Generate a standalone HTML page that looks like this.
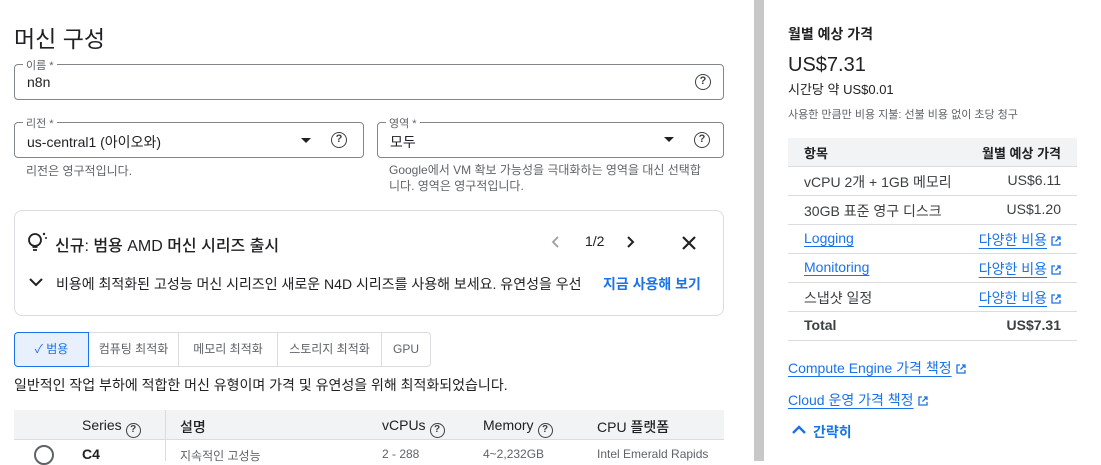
<!DOCTYPE html>
<html><head><meta charset="utf-8"><style>
*{margin:0;padding:0;box-sizing:border-box}
body{width:1101px;height:461px;overflow:hidden;background:#fff;font-family:"Liberation Sans","Noto Sans CJK KR",sans-serif;color:#202124;position:relative}
.a{position:absolute;white-space:nowrap}
.box{position:absolute;border:1px solid #80868b;border-radius:4px}
.lbl{position:absolute;top:-8px;left:8px;background:#fff;padding:0 3px;font-size:11px;color:#5f6368}
.help{position:absolute;width:16px;height:16px;border:1.6px solid #3c4043;border-radius:50%;font-size:11px;font-weight:bold;text-align:center;line-height:13px;color:#3c4043}
.hi{position:relative;display:inline-block;width:15px;height:15px;font-size:10px;line-height:12px;vertical-align:-2px;margin-left:4px}
.tri{position:absolute;width:0;height:0;border-left:5px solid transparent;border-right:5px solid transparent;border-top:5px solid #202124}
.blue{color:#1a73e8}
.lnk{color:#1a73e8;text-decoration:underline;text-underline-offset:3px}
.row{position:absolute;left:788px;width:289px;height:29px;border-bottom:1px solid #dadce0;font-size:14px;color:#3c4043}
.row .l{position:absolute;left:16px;top:5px}
.row .r{position:absolute;right:16px;top:5px}
.tab{position:absolute;top:332px;height:35px;border:1px solid #dadce0;font-size:12px;color:#5f6368;text-align:center;line-height:33px}
.ext{display:inline-block;width:10px;height:10px;margin-left:4px;vertical-align:-1px}
</style></head><body>
<div class="a" style="left:14px;top:20px;font-size:23px">머신 구성</div>

<div class="box" style="left:14px;top:64px;width:710px;height:36px"><span class="lbl">이름 *</span>
<span class="a" style="left:12px;top:9px;font-size:14px">n8n</span>
<div class="help" style="left:680px;top:9px">?</div></div>

<div class="box" style="left:14px;top:122px;width:350px;height:36px"><span class="lbl">리전 *</span>
<span class="a" style="left:12px;top:9px;font-size:14px">us-central1 (아이오와)</span>
<div class="tri" style="left:286px;top:15px"></div>
<div class="help" style="left:316px;top:9px">?</div></div>

<div class="box" style="left:377px;top:122px;width:347px;height:36px"><span class="lbl">영역 *</span>
<span class="a" style="left:12px;top:9px;font-size:14px">모두</span>
<div class="tri" style="left:286px;top:14px"></div>
<div class="help" style="left:316px;top:9px">?</div></div>

<div class="a" style="left:26px;top:162px;font-size:12px;color:#5f6368">리전은 영구적입니다.</div>
<div class="a" style="left:389px;top:162px;font-size:12px;color:#5f6368;line-height:16px">Google에서 VM 확보 가능성을 극대화하는 영역을 대신 선택합<br>니다. 영역은 영구적입니다.</div>

<div class="box" style="left:14px;top:210px;width:710px;height:106px;border-color:#dadce0;border-radius:8px"></div>
<svg class="a" style="left:26px;top:231px" width="24" height="24" viewBox="0 0 24 24"><circle cx="9" cy="9" r="6" fill="none" stroke="#202124" stroke-width="1.8"/><path d="M6.5 16h5M7 19h4" stroke="#202124" stroke-width="1.8"/><circle cx="18" cy="3" r="1.2" fill="#202124"/><circle cx="20" cy="7" r="1" fill="#202124"/></svg>
<div class="a" style="left:55px;top:232px;font-size:16px;font-weight:500">신규: 범용 AMD 머신 시리즈 출시</div>
<svg class="a" style="left:549px;top:235px" width="14" height="14"><path d="M9 2L4 7l5 5" fill="none" stroke="#9aa0a6" stroke-width="1.8"/></svg>
<div class="a" style="left:585px;top:233px;font-size:14px">1/2</div>
<svg class="a" style="left:624px;top:235px" width="14" height="14"><path d="M4 2l5 5-5 5" fill="none" stroke="#202124" stroke-width="2"/></svg>
<svg class="a" style="left:681px;top:235px" width="16" height="16"><path d="M2 2l12 12M14 2L2 14" stroke="#202124" stroke-width="2.2"/></svg>
<svg class="a" style="left:29px;top:277px" width="14" height="10"><path d="M1 2l6 6 6-6" fill="none" stroke="#202124" stroke-width="2"/></svg>
<div class="a" style="left:56px;top:274px;font-size:14px">비용에 최적화된 고성능 머신 시리즈인 새로운 N4D 시리즈를 사용해 보세요. 유연성을 우선</div>
<div class="a blue" style="left:603px;top:274px;font-size:14px;font-weight:bold">지금 사용해 보기</div>

<div class="tab" style="left:14px;width:75px;background:#e8f0fe;border-color:#1a73e8;color:#1a73e8;z-index:2;border-radius:4px 0 0 4px">✓ 범용</div>
<div class="tab" style="left:88px;width:91px">컴퓨팅 최적화</div>
<div class="tab" style="left:178px;width:100px">메모리 최적화</div>
<div class="tab" style="left:277px;width:105px">스토리지 최적화</div>
<div class="tab" style="left:381px;width:50px;border-radius:0 4px 4px 0">GPU</div>
<div class="a" style="left:14px;top:375px;font-size:14px">일반적인 작업 부하에 적합한 머신 유형이며 가격 및 유연성을 위해 최적화되었습니다.</div>

<div class="a" style="left:14px;top:410px;width:710px;height:30px;background:#f1f3f4;border-bottom:1px solid #dadce0"></div>
<div class="a" style="left:165px;top:410px;width:1px;height:51px;background:#dadce0"></div>
<div class="a" style="left:82px;top:417px;font-size:14px;font-weight:500">Series<span class="help hi">?</span></div>
<div class="a" style="left:180px;top:417px;font-size:14px;font-weight:500">설명</div>
<div class="a" style="left:382px;top:417px;font-size:14px;font-weight:500">vCPUs<span class="help hi">?</span></div>
<div class="a" style="left:483px;top:417px;font-size:14px;font-weight:500">Memory<span class="help hi">?</span></div>
<div class="a" style="left:597px;top:417px;font-size:14px;font-weight:500">CPU 플랫폼</div>
<div class="a" style="left:34px;top:445px;width:20px;height:20px;border:2px solid #5f6368;border-radius:50%"></div>
<div class="a" style="left:82px;top:446px;font-size:14px;font-weight:bold">C4</div>
<div class="a" style="left:180px;top:447px;font-size:12px;color:#5f6368">지속적인 고성능</div>
<div class="a" style="left:382px;top:447px;font-size:12px;color:#5f6368">2 - 288</div>
<div class="a" style="left:483px;top:447px;font-size:12px;color:#5f6368">4~2,232GB</div>
<div class="a" style="left:597px;top:447px;font-size:12px;color:#5f6368">Intel Emerald Rapids</div>

<div class="a" style="left:754px;top:0;width:10px;height:461px;background:#c8c8c8"></div>

<div class="a" style="left:788px;top:24px;font-size:14px;font-weight:bold">월별 예상 가격</div>
<div class="a" style="left:788px;top:54px;font-size:20px">US$7.31</div>
<div class="a" style="left:788px;top:79px;font-size:13px">시간당 약 US$0.01</div>
<div class="a" style="left:788px;top:106px;font-size:11px;color:#5f6368">사용한 만큼만 비용 지불: 선불 비용 없이 초당 청구</div>
<div class="row" style="top:138px;background:#f1f3f4"><span class="l" style="font-weight:bold;color:#202124;font-size:13px">항목</span><span class="r" style="font-weight:bold;color:#202124;font-size:13px">월별 예상 가격</span></div>
<div class="row" style="top:167px"><span class="l">vCPU 2개 + 1GB 메모리</span><span class="r">US$6.11</span></div>
<div class="row" style="top:196px"><span class="l">30GB 표준 영구 디스크</span><span class="r">US$1.20</span></div>
<div class="row" style="top:225px"><span class="l lnk">Logging</span><span class="r"><span class="lnk">다양한 비용</span><svg class="ext" viewBox="0 0 10 10"><path d="M4 1H1v8h8V6M6 1h3v3M9 1L4.5 5.5" fill="none" stroke="#1a73e8" stroke-width="1.3"/></svg></span></div>
<div class="row" style="top:254px"><span class="l lnk">Monitoring</span><span class="r"><span class="lnk">다양한 비용</span><svg class="ext" viewBox="0 0 10 10"><path d="M4 1H1v8h8V6M6 1h3v3M9 1L4.5 5.5" fill="none" stroke="#1a73e8" stroke-width="1.3"/></svg></span></div>
<div class="row" style="top:283px"><span class="l">스냅샷 일정</span><span class="r"><span class="lnk">다양한 비용</span><svg class="ext" viewBox="0 0 10 10"><path d="M4 1H1v8h8V6M6 1h3v3M9 1L4.5 5.5" fill="none" stroke="#1a73e8" stroke-width="1.3"/></svg></span></div>
<div class="row" style="top:312px"><span class="l" style="font-weight:bold">Total</span><span class="r" style="font-weight:bold">US$7.31</span></div>
<div class="a" style="left:788px;top:358px;font-size:14px"><span class="lnk">Compute Engine 가격 책정</span><svg class="ext" viewBox="0 0 10 10"><path d="M4 1H1v8h8V6M6 1h3v3M9 1L4.5 5.5" fill="none" stroke="#1a73e8" stroke-width="1.3"/></svg></div>
<div class="a" style="left:788px;top:390px;font-size:14px"><span class="lnk">Cloud 운영 가격 책정</span><svg class="ext" viewBox="0 0 10 10"><path d="M4 1H1v8h8V6M6 1h3v3M9 1L4.5 5.5" fill="none" stroke="#1a73e8" stroke-width="1.3"/></svg></div>
<svg class="a" style="left:792px;top:425px" width="14" height="10"><path d="M1 8l6-6 6 6" fill="none" stroke="#1a73e8" stroke-width="2.4"/></svg>
<div class="a blue" style="left:813px;top:422px;font-size:14px;font-weight:bold">간략히</div>
</body></html>
